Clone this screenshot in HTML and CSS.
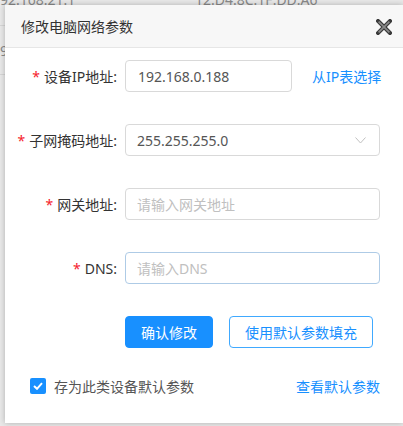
FILE: index.html
```html
<!DOCTYPE html>
<html lang="zh-CN">
<head>
    <meta charset="UTF-8">
    <meta name="viewport" content="width=device-width, initial-scale=1.0">
    <title>修改电脑网络参数</title>
    <link rel="stylesheet" href="styles.css">
</head>
<body>
    <div class="backdrop">
        <div class="bg-row">
            <span class="bg-ip">192.168.21.1</span>
            <span class="bg-mac">12:D4:8C:1F:DD:A6</span>
        </div>
        <div class="bg-row">
            <span class="bg-ip">19:</span>
        </div>
    </div>

    <div class="modal">
        <div class="modal-header">
            <span class="modal-title">修改电脑网络参数</span>
            <button class="close-btn" type="button">
                <svg width="16" height="16" viewBox="0 0 16 16">
                    <path d="M2 2 L14 14 M14 2 L2 14" stroke="#3a3a3a" stroke-width="4" stroke-linecap="square"/>
                    <path d="M2.6 2.6 L13.4 13.4 M13.4 2.6 L2.6 13.4" stroke="#8a8a8a" stroke-width="1.6"/>
                </svg>
            </button>
        </div>
        <div class="modal-body">
            <form class="net-form">
                <div class="form-row">
                    <label class="form-label"><span class="req">*</span>设备IP地址:</label>
                    <input class="text-input short" type="text" value="192.168.0.188">
                    <a class="link pick-link" href="#">从IP表选择</a>
                </div>
                <div class="form-row">
                    <label class="form-label"><span class="req">*</span>子网掩码地址:</label>
                    <div class="select-box">
                        <span>255.255.255.0</span>
                        <svg width="11" height="7" viewBox="0 0 11 7">
                            <path d="M0.5 0.5 L5.5 6 L10.5 0.5" fill="none" stroke="#c0c0c0" stroke-width="1"/>
                        </svg>
                    </div>
                </div>
                <div class="form-row">
                    <label class="form-label"><span class="req">*</span>网关地址:</label>
                    <input class="text-input" type="text" placeholder="请输入网关地址">
                </div>
                <div class="form-row">
                    <label class="form-label"><span class="req">*</span>DNS:</label>
                    <input class="text-input focused" type="text" placeholder="请输入DNS">
                </div>
                <div class="button-row">
                    <button class="btn btn-primary" type="button">确认修改</button>
                    <button class="btn btn-outline" type="button">使用默认参数填充</button>
                </div>
            </form>
            <div class="footer-row">
                <label class="check-label">
                    <span class="checkbox">
                        <svg width="10" height="8" viewBox="0 0 10 8">
                            <path d="M1 4 L4 6.8 L9 1.2" fill="none" stroke="#fff" stroke-width="2"/>
                        </svg>
                    </span>
                    存为此类设备默认参数
                </label>
                <a class="link" href="#">查看默认参数</a>
            </div>
        </div>
    </div>
</body>
</html>
```

FILE: styles.css
```css
body {
    margin: 0;
    width: 403px;
    height: 426px;
    overflow: hidden;
    background-color: #e9e9e9;
    font-family: "Noto Sans", "Noto Sans CJK SC", sans-serif;
    font-size: 14px;
    color: #333;
}
.backdrop {
    margin-top: -27px;
}
.bg-row {
    display: flex;
    height: 52px;
    align-items: center;
    border-bottom: 1px solid #d6d6d6;
    color: #8a8a8a;
}
.bg-row + .bg-row {
    height: 48px;
}
.bg-ip {
    margin-left: -8px;
    width: 203px;
}
.modal {
    position: absolute;
    top: 5px;
    left: 5px;
    width: 398px;
    height: 418px;
    background-color: #fff;
    box-shadow: 0 0 6px rgba(0, 0, 0, 0.25);
}
.modal-header {
    display: flex;
    align-items: center;
    justify-content: space-between;
    height: 42px;
    padding: 0 11px 0 16px;
    background-color: #f7f7f7;
    border-bottom: 1px solid #e6e6e6;
}
.modal-title {
    color: #333;
}
.close-btn {
    border: none;
    background: none;
    padding: 0;
    width: 16px;
    height: 16px;
    margin-top: 1px;
    cursor: pointer;
}
.modal-body {
    padding-top: 12px;
}
.form-row {
    display: flex;
    align-items: center;
    height: 32px;
    margin-bottom: 32px;
}
.form-label {
    width: 112px;
    margin-right: 8px;
    text-align: right;
    color: #333;
}
.req {
    color: #f5222d;
    margin-right: 4px;
}
.text-input, .select-box {
    box-sizing: border-box;
    width: 255px;
    height: 32px;
    padding: 0 11px;
    border: 1px solid #d9d9d9;
    border-radius: 4px;
    font-family: inherit;
    font-size: 14px;
    color: #555;
    outline: none;
}
.text-input.short {
    width: 167px;
    padding-left: 12px;
}
.text-input::placeholder {
    color: #c0c0c0;
}
.text-input.focused {
    border-color: #aecbe6;
}
.select-box {
    display: flex;
    align-items: center;
    justify-content: space-between;
    padding-right: 13px;
}
.link {
    color: #1890ff;
    text-decoration: none;
}
.pick-link {
    margin-left: 20px;
}
.button-row {
    display: flex;
    gap: 16px;
    margin-top: 1px;
    padding-left: 120px;
}
.btn {
    height: 32px;
    padding: 0 15px;
    border-radius: 4px;
    font-family: inherit;
    font-size: 14px;
    cursor: pointer;
}
.btn-primary {
    background-color: #1890ff;
    border: 1px solid #1890ff;
    color: #fff;
}
.btn-outline {
    background-color: #fff;
    border: 1px solid #40a9ff;
    color: #1890ff;
}
.footer-row {
    display: flex;
    align-items: center;
    justify-content: space-between;
    height: 16px;
    margin-top: 30px;
    padding: 0 23px 0 25px;
}
.check-label {
    display: flex;
    align-items: center;
    color: #555;
}
.checkbox {
    display: flex;
    align-items: center;
    justify-content: center;
    width: 16px;
    height: 16px;
    margin-right: 8px;
    border-radius: 2px;
    background-color: #1890ff;
}
```
